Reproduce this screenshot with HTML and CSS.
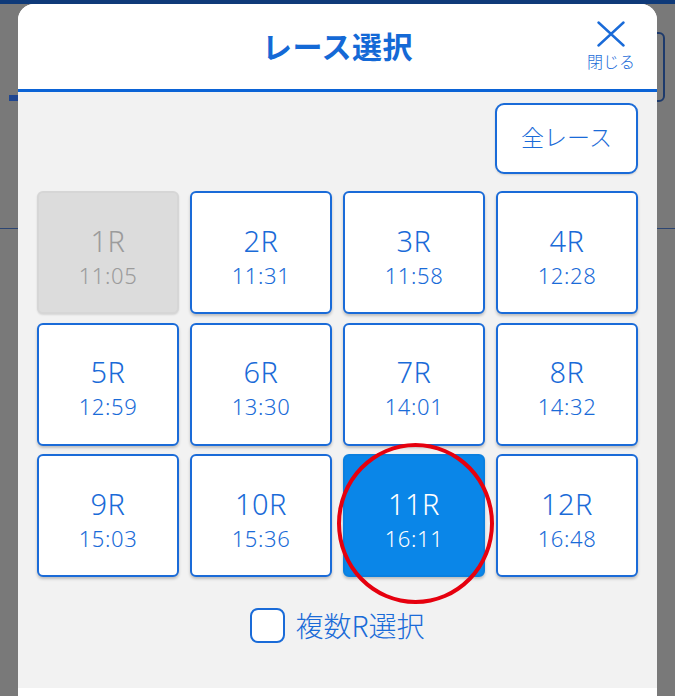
FILE: index.html
```html
<!DOCTYPE html>
<html lang="ja">
<head>
<meta charset="utf-8">
<title>レース選択</title>
<link rel="stylesheet" href="styles.css">
</head>
<body>
<div class="page">
  <div class="page-top"></div>
  <div class="page-row">
    <span class="page-tab"></span>
    <span class="page-btn"></span>
  </div>
  <div class="page-line"></div>
</div>

<div class="modal">
  <header class="modal-head">
    <h1 class="modal-title">レース選択</h1>
    <button class="close-btn" type="button">
      <svg class="close-icon" viewBox="0 0 28 26" width="28" height="26" aria-hidden="true">
        <path d="M1.5 1.5 L26.5 24.5 M26.5 1.5 L1.5 24.5" stroke="#1a6bd8" stroke-width="2.4" fill="none" stroke-linecap="round"/>
      </svg>
      <span class="close-label">閉じる</span>
    </button>
  </header>
  <div class="modal-body">
    <div class="all-row">
      <button class="all-btn" type="button">全レース</button>
    </div>
    <div class="race-grid">
      <div class="race disabled"><span class="num">1R</span><span class="time">11:05</span></div>
      <div class="race"><span class="num">2R</span><span class="time">11:31</span></div>
      <div class="race"><span class="num">3R</span><span class="time">11:58</span></div>
      <div class="race"><span class="num">4R</span><span class="time">12:28</span></div>
      <div class="race"><span class="num">5R</span><span class="time">12:59</span></div>
      <div class="race"><span class="num">6R</span><span class="time">13:30</span></div>
      <div class="race"><span class="num">7R</span><span class="time">14:01</span></div>
      <div class="race"><span class="num">8R</span><span class="time">14:32</span></div>
      <div class="race"><span class="num">9R</span><span class="time">15:03</span></div>
      <div class="race"><span class="num">10R</span><span class="time">15:36</span></div>
      <div class="race selected"><span class="num">11R</span><span class="time">16:11</span><span class="mark"></span></div>
      <div class="race"><span class="num">12R</span><span class="time">16:48</span></div>
    </div>
    <label class="multi">
      <span class="checkbox"></span>
      <span class="multi-label">複数R選択</span>
    </label>
  </div>
  <div class="modal-foot"></div>
</div>
</body>
</html>
```

FILE: styles.css
```css
* { box-sizing: border-box; }

html, body {
  margin: 0;
  padding: 0;
}

body {
  width: 675px;
  height: 696px;
  overflow: hidden;
  background: #797979;
  font-family: "Noto Sans CJK JP", "Noto Sans", sans-serif;
  position: relative;
}

/* dimmed page behind the modal */
.page {
  height: 696px;
}
.page-top {
  height: 4px;
  background: #0f3a79;
}
.page-row {
  display: flex;
  justify-content: space-between;
  align-items: flex-start;
  padding-top: 28px;
  height: 224px;
}
.page-tab {
  display: block;
  width: 9px;
  height: 6px;
  margin: 63px 0 0 9px;
  background: #1f4690;
}
.page-btn {
  display: block;
  width: 40px;
  height: 70px;
  margin-right: 10px;
  border: 2px solid #1d3a6c;
  border-radius: 6px;
}
.page-line {
  height: 1px;
  background: #2c4572;
}

/* modal */
.modal {
  position: absolute;
  top: 4px;
  left: 18px;
  width: 639px;
  height: 692px;
  display: flex;
  flex-direction: column;
  background: #ffffff;
  border-radius: 16px 16px 0 0;
  overflow: hidden;
}

.modal-head {
  position: relative;
  height: 88px;
  flex: none;
  display: flex;
  align-items: center;
  justify-content: center;
  background: #fff;
  border-bottom: 3px solid #0b63d6;
}

.modal-title {
  margin: 0 0 4px;
  font-size: 30px;
  font-weight: 700;
  color: #1469d6;
  letter-spacing: 0.5px;
}

.close-btn {
  position: absolute;
  right: 18px;
  top: 17px;
  width: 56px;
  padding: 0;
  border: 0;
  background: none;
  display: flex;
  flex-direction: column;
  align-items: center;
  font-family: inherit;
}
.close-icon {
  display: block;
}
.close-label {
  margin-top: 4px;
  font-size: 16px;
  line-height: 20px;
  font-weight: 300;
  color: #1a6bd8;
}

.modal-body {
  flex: 1;
  background: #f2f2f2;
  padding: 11px 19px 0;
}

.all-row {
  display: flex;
  justify-content: flex-end;
}
.all-btn {
  width: 143px;
  height: 71px;
  border: 2px solid #1a6bd8;
  border-radius: 9px;
  background: #fff;
  color: #1a6bd8;
  font-family: inherit;
  font-size: 23px;
  font-weight: 300;
  line-height: 30px;
  padding: 0 0 5px;
  box-shadow: 0 1px 2px rgba(0,0,0,0.15);
}

.race-grid {
  margin-top: 17px;
  display: grid;
  grid-template-columns: repeat(4, 1fr);
  grid-auto-rows: 123px;
  column-gap: 11px;
  row-gap: 8.5px;
}

.race {
  position: relative;
  display: flex;
  flex-direction: column;
  align-items: center;
  justify-content: center;
  padding-top: 8px;
  background: #fff;
  border: 2px solid #1a6bd8;
  border-radius: 6px;
  color: #1a6bd8;
  font-family: "Noto Sans", "Noto Sans CJK JP", sans-serif;
  font-weight: 300;
  box-shadow: 0 2px 3px rgba(0,0,0,0.22);
}
.race .num {
  font-size: 29px;
  line-height: 37px;
  letter-spacing: 0.5px;
}
.race .time {
  font-size: 22px;
  line-height: 33px;
  letter-spacing: 0.6px;
}

.race.disabled {
  background: #dcdcdc;
  border-color: #d6d6d6;
  color: #9b9b9b;
  box-shadow: 0 1px 2px rgba(0,0,0,0.12);
}

.race.selected {
  background: #0a86e8;
  border-color: #0a80e0;
  color: #ffffff;
}

.mark {
  position: absolute;
  left: -8px;
  top: -13px;
  width: 157px;
  height: 161px;
  border: 4px solid #e6000e;
  border-radius: 50%;
}

.multi {
  display: flex;
  justify-content: center;
  align-items: center;
  gap: 10px;
  margin-top: 30px;
  color: #1a6bd8;
}
.checkbox {
  width: 35px;
  height: 35px;
  border: 2px solid #1a6bd8;
  border-radius: 8px;
  background: #fff;
}
.multi-label {
  font-size: 28px;
  line-height: 36px;
  font-weight: 300;
}

.modal-foot {
  height: 8px;
  flex: none;
  background: #fff;
}
```
